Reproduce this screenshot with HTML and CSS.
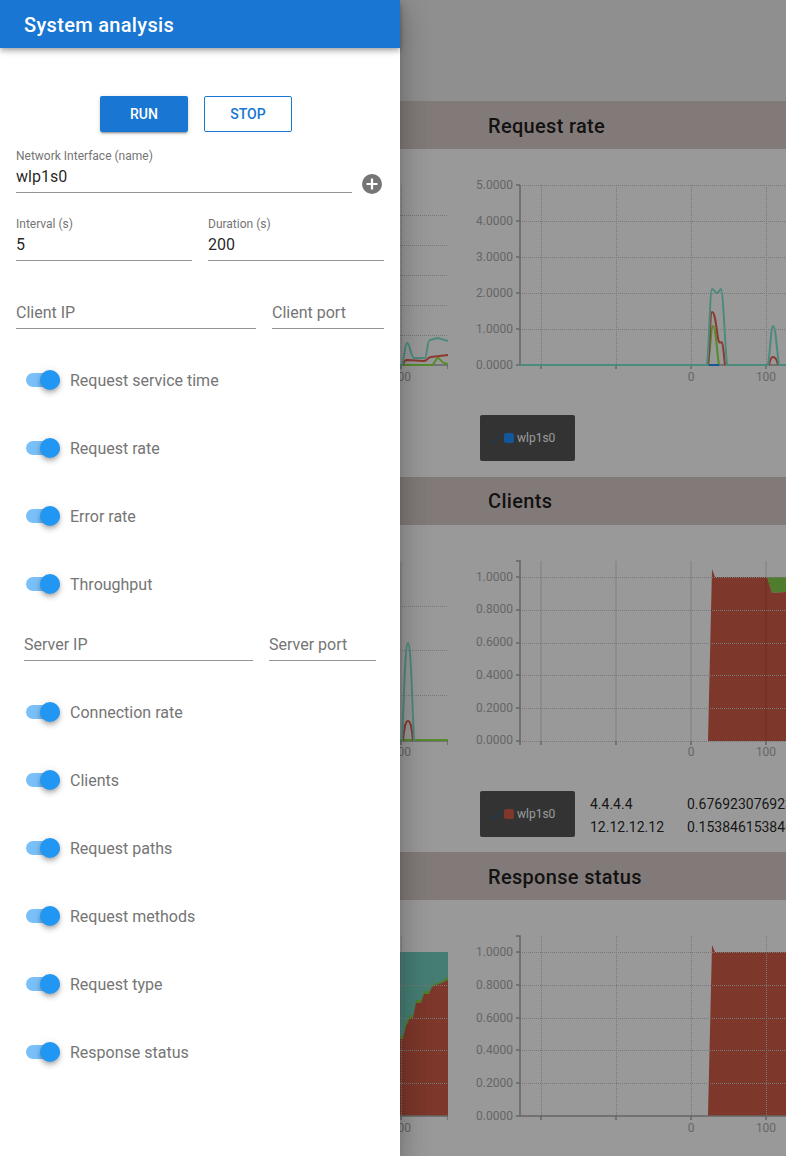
FILE: index.html
```html
<!DOCTYPE html>
<html lang="en">
<head>
<meta charset="utf-8">
<title>System analysis</title>
<link rel="stylesheet" href="styles.css">
</head>
<body>
<div class="app">
  <main class="page">
    <div class="page-top"></div>

    <section class="section section-a">
      <div class="sec-head"><h2 class="sec-title">Request rate</h2></div>
      <div class="charts">
        <svg class="chart-left" viewBox="0 149 448 328" width="448" height="328">
          <g class="grid">
            <path d="M400 215H448M400 245H448M400 275H448M400 305H448M400 335H448M401 185V365"/>
          </g>
          <path class="axis" d="M400 365H448M401 365V369M448 365V369"/>
          <text class="tick" x="401" y="381" text-anchor="middle">100</text>
          <path class="line green" d="M400 365H432C434 365 436 358 438 358C440 358 442 363 444 363L448 364"/>
          <path class="line red" d="M403 365C404 361 405 360 407 360L424 361C427 361 428 357 431 357L448 355"/>
          <path class="line teal" d="M400 365H402C404 360 405 343 407 343C410 343 411 358 414 358L425 358C427 358 427 340 430 340L438 338L448 341"/>
        </svg>
        <svg class="chart-right" viewBox="448 149 338 328" width="338" height="328">
          <g class="grid">
            <path d="M520 185H786M520 221H786M520 257H786M520 293H786M520 329H786M541 185V365M616 185V365M691 185V365M766 185V365"/>
          </g>
          <path class="axis" d="M520 185V365H786M516 185H520M516 221H520M516 257H520M516 293H520M516 329H520M516 365H520M541 365V369M616 365V369M691 365V369M766 365V369"/>
          <g class="tick" text-anchor="end">
            <text x="513" y="189">5.0000</text><text x="513" y="225">4.0000</text><text x="513" y="261">3.0000</text><text x="513" y="297">2.0000</text><text x="513" y="333">1.0000</text><text x="513" y="369">0.0000</text>
          </g>
          <text class="tick" x="691" y="381" text-anchor="middle">0</text>
          <text class="tick" x="766" y="381" text-anchor="middle">100</text>
          <path class="line green" d="M708 365C710 355 711 326 713 326C716 326 717 355 719 365"/>
          <path class="line red" d="M708 365C710 350 710 312 712 312C715 312 716 325 718 338C719 345 721 342 722 342C723 342 724 358 725 365M769 365C770 360 771 357 773 357C776 357 777 360 778 365"/>
          <path class="line teal" d="M520 365H707C709 350 710 289 712 289C714 289 715 293 717 293C719 293 720 289 721 289C723 289 725 345 727 365H768C770 355 771 326 773 326C776 326 777 355 779 365H786"/>
          <path class="line blue" d="M709 365H719"/>
        </svg>
      </div>
      <div class="legend-row">
        <div class="legend">
          <svg class="legend-check" viewBox="0 0 12 12" width="12" height="12"><path d="M1 7L4.500 10.500L11 2"/></svg>
          <span class="swatch swatch-blue"></span><span class="legend-name">wlp1s0</span>
        </div>
      </div>
    </section>

    <section class="section section-b">
      <div class="sec-head"><h2 class="sec-title">Clients</h2></div>
      <div class="charts">
        <svg class="chart-left" viewBox="0 525 448 328" width="448" height="328">
          <g class="grid">
            <path d="M400 606H448M400 650H448M400 695H448"/>
          </g>
          <path class="vline" d="M401 561V741"/>
          <path class="axis" d="M400 741H448M401 741V745M448 741V745"/>
          <text class="tick" x="401" y="756" text-anchor="middle">100</text>
          <path class="line green" d="M400 740H448"/>
          <path class="line red" d="M403 741C404 730 405 721 408 721C411 721 412 730 413 741"/>
          <path class="line teal" d="M402 741C404 700 405 643 408 643C411 643 412 700 414 741"/>
        </svg>
        <svg class="chart-right" viewBox="448 525 338 328" width="338" height="328">
          <path class="vline" d="M541 561V741M616 561V741M691 561V741M766 561V741"/>
          <polygon class="fill-green" points="767,577 772,593 786,592 786,577"/>
          <polygon class="fill-red" points="708,741 712,569 715,577 767,577 772,593 786,592 786,741"/>
          <path class="vline over" d="M766 578V741"/>
          <g class="grid">
            <path d="M520 577H786M520 610H786M520 643H786M520 675H786M520 708H786M520 741H786"/>
          </g>
          <path class="axis" d="M516 561H520V741M516 577H520M516 610H520M516 643H520M516 675H520M516 708H520M516 741H520M520 741V745M541 741V745M616 741V745M691 741V745M766 741V745"/>
          <g class="tick" text-anchor="end">
            <text x="513" y="581">1.0000</text><text x="513" y="613">0.8000</text><text x="513" y="646">0.6000</text><text x="513" y="679">0.4000</text><text x="513" y="712">0.2000</text><text x="513" y="744">0.0000</text>
          </g>
          <text class="tick" x="691" y="756" text-anchor="middle">0</text>
          <text class="tick" x="766" y="756" text-anchor="middle">100</text>
        </svg>
      </div>
      <div class="legend-row">
        <div class="legend">
          <svg class="legend-check" viewBox="0 0 12 12" width="12" height="12"><path d="M1 7L4.500 10.500L11 2"/></svg>
          <span class="swatch swatch-red"></span><span class="legend-name">wlp1s0</span>
        </div>
        <div class="stats">
          <span>4.4.4.4</span><span>0.676923076923</span>
          <span>12.12.12.12</span><span>0.153846153846</span>
        </div>
      </div>
    </section>

    <section class="section section-c">
      <div class="sec-head"><h2 class="sec-title">Response status</h2></div>
      <div class="charts">
        <svg class="chart-left" viewBox="0 900 448 256" width="448" height="256">
          <rect class="fill-teal" x="400" y="952" width="48" height="164"/>
          <polygon class="fill-green" points="400,1036 403,1035 406,1021 410,1015 413,1015 416,1000 421,1000 424,991 429,991 432,985 436,983 442,981 448,977 448,981 442,983 436,985 432,987 429,994 424,994 421,1003 416,1003 413,1018 410,1018 406,1026 403,1039 400,1039"/>
          <polygon class="fill-red" points="400,1039 403,1039 406,1026 410,1018 413,1018 416,1003 421,1003 424,994 429,994 432,987 436,985 442,983 448,980 448,1116 400,1116"/>
          <g class="grid">
            <path d="M400 985H448M400 1018H448M400 1050H448M400 1083H448M401 936V1116"/>
          </g>
          <path class="axis" d="M400 1116H448M401 1116V1120M448 1116V1120"/>
          <text class="tick" x="401" y="1132" text-anchor="middle">100</text>
        </svg>
        <svg class="chart-right" viewBox="448 900 338 256" width="338" height="256">
          <polygon class="fill-red" points="708,1116 712,945 715,952 786,952 786,1116"/>
          <g class="grid">
            <path d="M520 952H786M520 985H786M520 1018H786M520 1050H786M520 1083H786M541 936V1116M616 936V1116M691 936V1116M766 936V1116"/>
          </g>
          <path class="axis" d="M516 936H520V1116H786M516 952H520M516 985H520M516 1018H520M516 1050H520M516 1083H520M516 1116H520M541 1116V1120M616 1116V1120M691 1116V1120M766 1116V1120"/>
          <g class="tick" text-anchor="end">
            <text x="513" y="956">1.0000</text><text x="513" y="989">0.8000</text><text x="513" y="1022">0.6000</text><text x="513" y="1054">0.4000</text><text x="513" y="1087">0.2000</text><text x="513" y="1120">0.0000</text>
          </g>
          <text class="tick" x="691" y="1132" text-anchor="middle">0</text>
          <text class="tick" x="766" y="1132" text-anchor="middle">100</text>
        </svg>
      </div>
    </section>
  </main>

  <div class="scrim"></div>

  <aside class="drawer">
    <header class="appbar"><h1 class="appbar-title">System analysis</h1></header>

    <div class="actions">
      <button class="btn btn-solid" type="button">Run</button>
      <button class="btn btn-outline" type="button">Stop</button>
    </div>

    <div class="row row-iface">
      <label class="field">
        <span class="field-label">Network Interface (name)</span>
        <input class="field-input" value="wlp1s0">
      </label>
      <svg class="add-icon" viewBox="0 0 20 20" width="20" height="20"><circle cx="10" cy="10" r="10"/><path d="M10 4.500V15.500M4.500 10H15.500"/></svg>
    </div>

    <div class="row row-times">
      <label class="field">
        <span class="field-label">Interval (s)</span>
        <input class="field-input" value="5">
      </label>
      <label class="field">
        <span class="field-label">Duration (s)</span>
        <input class="field-input" value="200">
      </label>
    </div>

    <div class="row row-client">
      <input class="field-input" placeholder="Client IP">
      <input class="field-input" placeholder="Client port">
    </div>

    <ul class="switches">
      <li class="switch-row"><span class="switch"><span class="track"></span><span class="thumb"></span></span>Request service time</li>
      <li class="switch-row"><span class="switch"><span class="track"></span><span class="thumb"></span></span>Request rate</li>
      <li class="switch-row"><span class="switch"><span class="track"></span><span class="thumb"></span></span>Error rate</li>
      <li class="switch-row"><span class="switch"><span class="track"></span><span class="thumb"></span></span>Throughput</li>
    </ul>

    <div class="row row-server">
      <input class="field-input" placeholder="Server IP">
      <input class="field-input" placeholder="Server port">
    </div>

    <ul class="switches">
      <li class="switch-row"><span class="switch"><span class="track"></span><span class="thumb"></span></span>Connection rate</li>
      <li class="switch-row"><span class="switch"><span class="track"></span><span class="thumb"></span></span>Clients</li>
      <li class="switch-row"><span class="switch"><span class="track"></span><span class="thumb"></span></span>Request paths</li>
      <li class="switch-row"><span class="switch"><span class="track"></span><span class="thumb"></span></span>Request methods</li>
      <li class="switch-row"><span class="switch"><span class="track"></span><span class="thumb"></span></span>Request type</li>
      <li class="switch-row"><span class="switch"><span class="track"></span><span class="thumb"></span></span>Response status</li>
    </ul>
  </aside>
</div>
</body>
</html>
```

FILE: styles.css
```css
* { box-sizing: border-box; }
html, body { margin: 0; padding: 0; }
body {
  font-family: Roboto, "Liberation Sans", sans-serif;
  background: #fff;
  overflow: hidden;
}
.app {
  position: relative;
  width: 786px;
  height: 1156px;
  overflow: hidden;
}

/* Page behind the drawer */
.page { width: 786px; height: 1156px; overflow: hidden; background: #fff; }
.page-top { height: 101px; background: #eeeff1; }
.section { position: relative; overflow: hidden; }
.section-a { height: 376px; }
.section-b { height: 375px; }
.section-c { height: 304px; }
.sec-head {
  height: 48px;
  padding-left: 488px;
  padding-top: 2px;
  background: #d7ccc8;
  display: flex;
  align-items: center;
}
.section-b .sec-head { padding-top: 0; }
.sec-title {
  margin: 0;
  font-size: 20px;
  font-weight: 500;
  letter-spacing: 0.32px;
  color: rgba(0, 0, 0, 0.87);
}
.charts { display: flex; align-items: flex-start; }
.chart-left, .chart-right { display: block; flex: none; }
.grid path { fill: none; stroke: #c8c8c8; stroke-width: 1; stroke-dasharray: 1 1; shape-rendering: crispEdges; }
.axis { fill: none; stroke: #aaa; stroke-width: 1.5; }
.vline { fill: none; stroke: #e2e2e2; stroke-width: 1.5; }
.vline.over { stroke: #bd5543; }
.tick { font-family: Roboto, sans-serif; font-size: 12px; fill: #aaa; }
.line { fill: none; stroke-width: 2; stroke-linejoin: round; }
.teal { stroke: #7fe6d2; }
.red { stroke: #e8614c; }
.green { stroke: #8fe84a; }
.blue { stroke: #2196f3; }
.fill-red { fill: #d05c48; }
.fill-green { fill: #85d04b; }
.fill-teal { fill: #75d0c0; }

.legend-row {
  position: absolute;
  left: 480px;
  top: 314px;
  display: flex;
  align-items: flex-start;
}
.legend {
  width: 95px;
  height: 46px;
  background: #555;
  border-radius: 2px;
  display: flex;
  align-items: center;
  padding-left: 10px;
  flex: none;
}
.legend-check { fill: none; stroke: #3a5a78; stroke-width: 1.5; flex: none; margin-right: 2px; }
.swatch { width: 10px; height: 10px; border-radius: 2px; margin-right: 3px; flex: none; }
.swatch-blue { background: #2090ff; }
.swatch-red { background: #d05c48; }
.legend-name { font-size: 12px; color: #fff; }
.stats {
  display: grid;
  grid-template-columns: 97px 200px;
  margin-left: 15px;
  margin-top: 2px;
  font-size: 14px;
  line-height: 23px;
  color: rgba(0, 0, 0, 0.87);
  white-space: nowrap;
}

/* Scrim + drawer */
.scrim {
  position: absolute;
  inset: 0;
  background: rgba(0, 0, 0, 0.4);
}
.drawer {
  position: absolute;
  left: 0;
  top: 0;
  width: 400px;
  height: 1156px;
  background: #fff;
  box-shadow: 0 8px 10px -5px rgba(0,0,0,.2), 0 16px 24px 2px rgba(0,0,0,.14), 0 6px 30px 5px rgba(0,0,0,.12);
}
.appbar {
  height: 48px;
  background: #1976d2;
  display: flex;
  align-items: center;
  padding-left: 24px;
  padding-top: 2px;
  box-shadow: 0 2px 4px -1px rgba(0,0,0,.2), 0 4px 5px 0 rgba(0,0,0,.14), 0 1px 10px 0 rgba(0,0,0,.12);
}
.appbar-title {
  margin: 0;
  color: #fff;
  font-size: 20px;
  font-weight: 500;
  letter-spacing: 0.32px;
}
.actions {
  display: flex;
  justify-content: center;
  gap: 16px;
  margin-top: 48px;
  width: 392px;
}
.btn {
  width: 88px;
  height: 36px;
  border-radius: 2px;
  font-family: inherit;
  font-size: 14px;
  font-weight: 500;
  text-transform: uppercase;
  padding: 0;
}
.btn-solid {
  background: #1976d2;
  color: #fff;
  border: 0;
  box-shadow: 0 3px 1px -2px rgba(0,0,0,.2), 0 2px 2px 0 rgba(0,0,0,.14), 0 1px 5px 0 rgba(0,0,0,.12);
}
.btn-outline {
  background: #fff;
  color: #1976d2;
  border: 1px solid #1976d2;
}
.row { display: flex; align-items: flex-end; gap: 16px; }
.row-iface { margin-top: 16px; padding: 0 18px 0 16px; gap: 10px; }
.row-times { margin-top: 23px; padding: 0 16px; }
.row-client { margin-top: 39px; padding: 0 16px; }
.row-server { margin-top: 14px; padding: 0 24px; }
.row-times .field { width: 176px; flex: none; }
.row-iface .field { flex: 1; }
.row-client .field-input:first-child { width: 240px; }
.row-client .field-input:last-child { width: 112px; }
.row-server .field-input:first-child { width: 229px; }
.row-server .field-input:last-child { width: 107px; }
.field { display: block; min-width: 0; }
.field-label {
  display: block;
  font-size: 12px;
  line-height: 16px;
  color: #757575;
}
.field-input {
  display: block;
  width: 100%;
  height: 29px;
  border: 0;
  border-bottom: 1px solid #949494;
  background: transparent;
  padding: 0 0 4px;
  margin: 0;
  font-family: inherit;
  font-size: 16px;
  line-height: 24px;
  color: rgba(0, 0, 0, 0.87);
  outline: none;
  border-radius: 0;
}
.field-input::placeholder { color: #757575; opacity: 1; }
.add-icon { flex: none; margin-bottom: -1px; }
.add-icon circle { fill: #757575; }
.add-icon path { stroke: #fff; stroke-width: 2.2; fill: none; }
.switches { list-style: none; margin: 17px 0 0; padding: 0; }
.switch-row {
  height: 68px;
  display: flex;
  align-items: center;
  padding-left: 26px;
  font-size: 16px;
  color: #757575;
}
.switch { position: relative; width: 34px; height: 20px; margin-right: 10px; flex: none; }
.track {
  position: absolute;
  left: 0;
  top: 3px;
  width: 34px;
  height: 14px;
  border-radius: 7px;
  background: #2196f3;
  opacity: 0.6;
}
.thumb {
  position: absolute;
  right: 0;
  top: 0;
  width: 20px;
  height: 20px;
  border-radius: 50%;
  background: #2196f3;
  box-shadow: 0 2px 4px -1px rgba(0,0,0,.2), 0 4px 5px 0 rgba(0,0,0,.14), 0 1px 10px 0 rgba(0,0,0,.12);
}
```
